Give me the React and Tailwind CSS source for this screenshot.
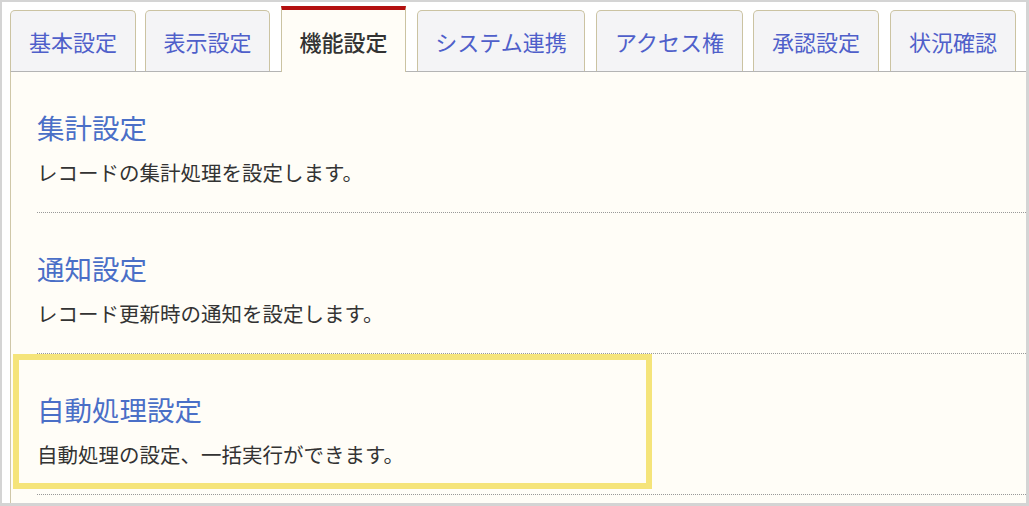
import React from 'react';

const TABS = [
  { label: '基本設定', cls: 'w-[126px]' },
  { label: '表示設定', cls: 'w-[125px] ml-[9px]' },
  { label: '機能設定', cls: 'w-[125px] ml-[11px]', active: true },
  { label: 'システム連携', cls: 'w-[168px] ml-[11px]' },
  { label: 'アクセス権', cls: 'w-[147px] ml-[11px]' },
  { label: '承認設定', cls: 'w-[126px] ml-[10px]' },
  { label: '状況確認', cls: 'w-[126px] ml-[11px]' },
];

const SECTIONS = [
  { title: '集計設定', desc: 'レコードの集計処理を設定します。' },
  { title: '通知設定', desc: 'レコード更新時の通知を設定します。' },
  { title: '自動処理設定', desc: '自動処理の設定、一括実行ができます。', highlight: true },
];

function Tab({ label, cls, active }) {
  if (active) {
    return (
      <div
        className={`${cls} relative z-10 -mb-px h-[66px] flex items-center justify-center border-t-4 border-t-[#b30f0f] border-x border-x-[#cbc3a2] bg-[#fffdf7] text-[22px] font-medium text-[#333]`}
      >
        {label}
      </div>
    );
  }
  return (
    <div
      className={`${cls} h-[61px] flex items-center justify-center rounded-t-[5px] border-t border-x border-[#cbc3a2] bg-[#f4f4f6] text-[22px] text-[#4f5fca]`}
    >
      {label}
    </div>
  );
}

export default function App() {
  return (
    <div className="w-[1029px] h-[506px] overflow-hidden bg-white border-t-2 border-l-2 border-r-[3px] border-b-[3px] border-[#d4d4d4] pt-[4px] pl-[8px] flex flex-col font-['Noto_Sans_CJK_JP',sans-serif]">
      {/* タブ */}
      <div className="flex items-end h-[65px]">
        {TABS.map((t) => (
          <Tab key={t.label} {...t} />
        ))}
      </div>

      {/* パネル */}
      <div className="flex-1 border-t border-t-[#b4b4b4] border-l border-l-[#cfc7a8] bg-[#fffdf7] pl-[26px]">
        {SECTIONS.map((s) => (
          <div key={s.title} className="relative pt-[37px] pb-[26px] border-b border-dotted border-[#999]">
            {s.highlight && (
              <div className="absolute left-[-24px] top-0 w-[639px] h-[135px] border-[6px] border-[#f5e47a] pointer-events-none" />
            )}
            <div className="text-[27.5px] leading-[36px] text-[#4a6fc7]">{s.title}</div>
            <div className="mt-[13px] text-[20.5px] leading-[28px] text-[#333]">{s.desc}</div>
          </div>
        ))}
      </div>
    </div>
  );
}
